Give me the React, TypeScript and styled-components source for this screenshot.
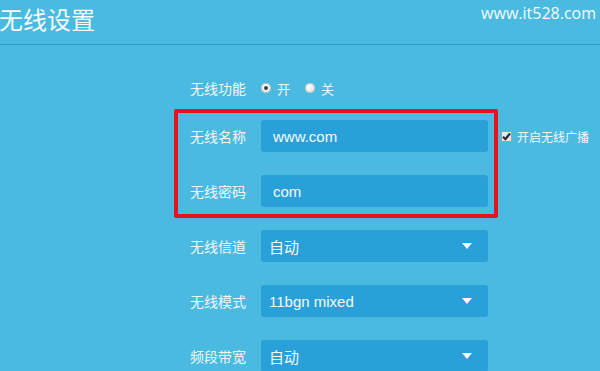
import React from "react";
import styled, { createGlobalStyle } from "styled-components";

const Global = createGlobalStyle`
  html, body { margin: 0; padding: 0; }
  body {
    background: #4bbae0;
    width: 600px;
    height: 371px;
    overflow: hidden;
    font-family: "Noto Sans", "Noto Sans CJK SC", sans-serif;
    color: #f2f9fd;
  }
`;

const Page = styled.div`
  width: 600px;
  height: 371px;
  background: #4bbae0;
  overflow: hidden;
`;

const Header = styled.header`
  height: 44px;
  border-bottom: 1px solid #2b9bce;
  display: flex;
  justify-content: space-between;
  align-items: flex-start;
  box-sizing: content-box;
`;

const Title = styled.h1`
  margin: 0;
  padding-top: 3px;
  font-family: "Noto Sans CJK SC", sans-serif;
  font-weight: 400;
  font-size: 24px;
  line-height: 32px;
  color: #f4fafd;
  margin-left: -1px;
`;

const Site = styled.div`
  padding-top: 2px;
  padding-right: 4px;
  font-family: "Open Sans", sans-serif;
  font-size: 16px;
  line-height: 22px;
  color: #f4fafd;
`;

const Form = styled.div`
  margin-left: 190px;
  padding-top: 33px;
  display: flex;
  flex-direction: column;
  gap: 23px;
`;

const Row = styled.div<{ $h?: number }>`
  display: flex;
  align-items: center;
  height: ${(p) => p.$h ?? 32}px;
`;

const Label = styled.span`
  width: 71px;
  flex: none;
  font-family: "Noto Sans CJK SC", sans-serif;
  font-size: 14px;
  color: #eef8fc;
`;

const Group = styled.div`
  position: relative;
  display: flex;
  flex-direction: column;
  gap: 23px;
`;

const Frame = styled.div`
  position: absolute;
  top: -11px;
  left: -16px;
  width: 324px;
  height: 109px;
  box-sizing: border-box;
  border: 4px solid #e3141d;
  border-radius: 2px;
  pointer-events: none;
`;

const Field = styled.div<{ $pad: number }>`
  width: 227px;
  height: 32px;
  box-sizing: border-box;
  background: #2aa0d8;
  border-radius: 3px;
  display: flex;
  align-items: center;
  justify-content: space-between;
  padding: 0 16px 0 ${(p) => p.$pad}px;
  font-family: "Liberation Sans", "Noto Sans CJK SC", sans-serif;
  font-size: 15px;
  color: #f4fafd;
`;

const Arrow = styled.span`
  width: 0;
  height: 0;
  border-left: 5px solid transparent;
  border-right: 5px solid transparent;
  border-top: 6px solid #ffffff;
`;

const RadioItem = styled.label`
  display: flex;
  align-items: center;
  gap: 6px;
  margin-right: 15px;
  font-family: "Noto Sans CJK SC", sans-serif;
  font-size: 13px;
  color: #eef8fc;
`;

const RadioDot = styled.span<{ $on?: boolean }>`
  width: 10px;
  height: 10px;
  border-radius: 50%;
  background: radial-gradient(circle at 40% 35%, #ffffff, #d4d8db);
  box-shadow: inset 0 0 0 1px #b9c0c5;
  display: flex;
  align-items: center;
  justify-content: center;
  &::after {
    content: "";
    width: 4px;
    height: 4px;
    border-radius: 50%;
    background: ${(p) => (p.$on ? "#444" : "transparent")};
  }
`;

const Check = styled.label`
  display: flex;
  align-items: center;
  gap: 5px;
  margin-left: 13px;
  font-family: "Noto Sans CJK SC", sans-serif;
  font-size: 12px;
  color: #eef8fc;
`;

const CheckBox = styled.span`
  width: 11px;
  height: 11px;
  background: #e4e6e8;
  border: 1px solid #9aa3a9;
  box-sizing: border-box;
  display: flex;
  align-items: center;
  justify-content: center;
`;

export default function App() {
  return (
    <Page>
      <Global />
      <Header>
        <Title>无线设置</Title>
        <Site>www.it528.com</Site>
      </Header>
      <Form>
        <Row $h={20} style={{ marginBottom: -1 }}>
          <Label>无线功能</Label>
          <RadioItem>
            <RadioDot $on />开
          </RadioItem>
          <RadioItem>
            <RadioDot />关
          </RadioItem>
        </Row>
        <Group>
          <Frame />
          <Row>
            <Label>无线名称</Label>
            <Field $pad={12}>www.com</Field>
            <Check>
              <CheckBox>
                <svg width="9" height="9" viewBox="0 0 9 9">
                  <path d="M1 4.8 L3.4 7.2 L8 1.5" fill="none" stroke="#2a2a2a" strokeWidth="2.2" />
                </svg>
              </CheckBox>
              开启无线广播
            </Check>
          </Row>
          <Row>
            <Label>无线密码</Label>
            <Field $pad={12}>com</Field>
          </Row>
        </Group>
        <Row>
          <Label>无线信道</Label>
          <Field $pad={8}>
            自动<Arrow />
          </Field>
        </Row>
        <Row>
          <Label>无线模式</Label>
          <Field $pad={8}>
            11bgn mixed<Arrow />
          </Field>
        </Row>
        <Row>
          <Label>频段带宽</Label>
          <Field $pad={8}>
            自动<Arrow />
          </Field>
        </Row>
      </Form>
    </Page>
  );
}
